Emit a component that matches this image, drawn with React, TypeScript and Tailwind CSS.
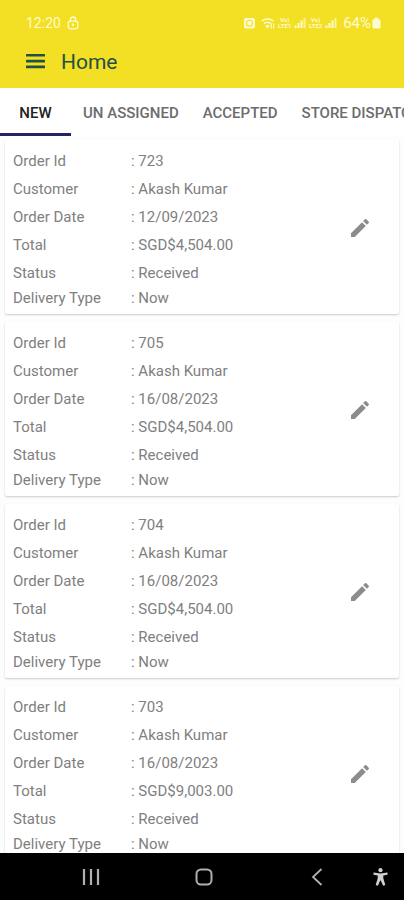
import { useState } from "react";
import type { ReactNode } from "react";

type Order = {
  id: string;
  customer: string;
  date: string;
  total: string;
  status: string;
  deliveryType: string;
};

const TABS = ["NEW", "UN ASSIGNED", "ACCEPTED", "STORE DISPATCHED"];

const ORDERS: Order[] = [
  {
    id: "723",
    customer: "Akash Kumar",
    date: "12/09/2023",
    total: "SGD$4,504.00",
    status: "Received",
    deliveryType: "Now",
  },
  {
    id: "705",
    customer: "Akash Kumar",
    date: "16/08/2023",
    total: "SGD$4,504.00",
    status: "Received",
    deliveryType: "Now",
  },
  {
    id: "704",
    customer: "Akash Kumar",
    date: "16/08/2023",
    total: "SGD$4,504.00",
    status: "Received",
    deliveryType: "Now",
  },
  {
    id: "703",
    customer: "Akash Kumar",
    date: "16/08/2023",
    total: "SGD$9,003.00",
    status: "Received",
    deliveryType: "Now",
  },
];

export default function App() {
  const [tab, setTab] = useState("NEW");

  return (
    <div className="flex h-screen flex-col overflow-hidden bg-[#fdfdfd] font-[Roboto,sans-serif]">
      <header className="h-[88px] shrink-0 bg-[#f3e024]">
        <StatusBar />
        <div className="flex h-8 items-center gap-4 pl-[26px]">
          <button type="button" aria-label="Open menu" className="text-[#1f5147]">
            <svg width="19" height="18" viewBox="0 0 19 18" fill="currentColor">
              <rect y="1" width="19" height="2.6" rx="0.5" />
              <rect y="6.8" width="19" height="2.6" rx="0.5" />
              <rect y="12.6" width="19" height="2.6" rx="0.5" />
            </svg>
          </button>
          <h1 className="text-[21px] leading-8 text-[#1f5147]">Home</h1>
        </div>
      </header>

      <nav
        role="tablist"
        aria-label="Order status"
        className="flex h-12 shrink-0 overflow-x-auto overflow-y-hidden bg-white [scrollbar-width:none]"
      >
        {TABS.map((t) => (
          <button
            key={t}
            type="button"
            role="tab"
            aria-selected={t === tab}
            onClick={() => setTab(t)}
            className={`min-w-[71px] shrink-0 border-b-[3px] px-3 pt-[6px] text-[15px] font-medium whitespace-nowrap ${
              t === tab
                ? "border-[#22265f] text-[#222222]"
                : "border-transparent text-[#6c6c6c]"
            }`}
          >
            {t}
          </button>
        ))}
      </nav>

      <main className="min-h-0 flex-1 overflow-y-auto [scrollbar-width:none]">
        <ul className="flex flex-col gap-2 px-[5px] py-1">
          {ORDERS.map((o) => (
            <OrderCard key={o.id} order={o} />
          ))}
        </ul>
      </main>

      <NavigationBar />
    </div>
  );
}

function OrderCard({ order }: { order: Order }) {
  return (
    <li className="flex items-center justify-between rounded-[2px] bg-white pt-[7px] pr-[27px] pb-[5px] pl-2 shadow-[0_1px_2px_rgba(0,0,0,0.2)]">
      <dl className="text-[15px] text-[#808080]">
        <Row label="Order Id" value={order.id} />
        <Row label="Customer" value={order.customer} />
        <Row label="Order Date" value={order.date} />
        <Row label="Total" value={order.total} />
        <Row label="Status" value={order.status} />
        <Row label="Delivery Type" value={order.deliveryType} last />
      </dl>
      <button
        type="button"
        aria-label={`Edit order ${order.id}`}
        className="text-[#8c8c8c]"
      >
        <svg width="24" height="24" viewBox="0 0 24 24" fill="currentColor">
          <path d="M3 17.25V21h3.75L17.81 9.94l-3.75-3.75L3 17.25zM20.71 7.04a1 1 0 0 0 0-1.41l-2.34-2.34a1 1 0 0 0-1.41 0l-1.83 1.83 3.75 3.75 1.83-1.83z" />
        </svg>
      </button>
    </li>
  );
}

function Row({
  label,
  value,
  last = false,
}: {
  label: string;
  value: string;
  last?: boolean;
}) {
  return (
    <div className={`flex ${last ? "leading-[22px]" : "leading-7"}`}>
      <dt className="w-[118px]">{label}</dt>
      <dd>: {value}</dd>
    </div>
  );
}

function StatusBar() {
  return (
    <div className="flex h-[46px] items-center justify-between pr-[23px] pl-[26px] text-[14px] text-[#fffbd0]">
      <div className="flex items-center gap-[6px]">
        <span>12:20</span>
        <svg width="12" height="14" viewBox="0 0 12 14" fill="none" stroke="currentColor" strokeWidth="1.3">
          <path d="M3.4 5.5V3.6a2.6 2.6 0 0 1 5.2 0v1.9" />
          <rect x="1.2" y="5.2" width="9.6" height="7.6" rx="2.6" />
          <path d="M6 7.4v3M4.8 8.4h2.4" />
        </svg>
      </div>
      <div className="flex items-center gap-[2px]">
        <svg width="11" height="12" viewBox="0 0 11 12">
          <rect y="1" width="11" height="10.5" rx="2" fill="currentColor" />
          <circle cx="5.5" cy="6.2" r="3" fill="none" stroke="#f3e024" strokeWidth="1.1" />
        </svg>
        <svg className="ml-1" width="14" height="12" viewBox="0 0 14 12" fill="none" stroke="currentColor" strokeWidth="1.5">
          <path d="M0.8 4a9 9 0 0 1 11.6 0M3 6.6a5.6 5.6 0 0 1 7 0" />
          <path d="M5.2 9a2.2 2.2 0 0 1 2.8 0L6.6 10.6zM10.4 6.5v5M12.6 6.5v5" strokeWidth="1.1" />
        </svg>
        <Volte>LTE1</Volte>
        <SignalBars />
        <Volte>LTE2</Volte>
        <SignalBars />
        <span className="ml-1 text-[15px]">64%</span>
        <svg className="-ml-px" width="9" height="12" viewBox="0 0 9 12" fill="currentColor">
          <path d="M2.6 0.8h3.8v1.4h0.8A1.3 1.3 0 0 1 8.5 3.5v6.7a1.3 1.3 0 0 1-1.3 1.3H1.8a1.3 1.3 0 0 1-1.3-1.3V3.5a1.3 1.3 0 0 1 1.3-1.3h0.8z" />
        </svg>
      </div>
    </div>
  );
}

function Volte({ children }: { children: ReactNode }) {
  return (
    <span className="flex w-[15px] flex-col items-center text-[6px] leading-[6px] font-bold">
      <span>Vo)</span>
      <span>{children}</span>
    </span>
  );
}

function SignalBars() {
  return (
    <svg width="12" height="12" viewBox="0 0 12 12" fill="currentColor">
      <rect x="0.5" y="8.5" width="2" height="2.5" />
      <rect x="3.5" y="6" width="2" height="5" />
      <rect x="6.5" y="3.5" width="2" height="7.5" />
      <rect x="9.5" y="1" width="2" height="10" opacity="0.7" />
    </svg>
  );
}

function NavigationBar() {
  return (
    <nav
      aria-label="System"
      className="grid h-[47px] shrink-0 grid-cols-[35px_1fr_1fr_1fr_31px] items-center bg-black text-[#b0b0b0]"
    >
      <button
        type="button"
        aria-label="Recent apps"
        className="col-start-2 justify-self-center"
      >
        <svg width="18" height="18" viewBox="0 0 18 18" fill="none" stroke="currentColor" strokeWidth="2.2">
          <path d="M2 1v16M9 1v16M16 1v16" />
        </svg>
      </button>
      <button
        type="button"
        aria-label="Home screen"
        className="justify-self-center"
      >
        <svg width="18" height="18" viewBox="0 0 18 18" fill="none" stroke="currentColor" strokeWidth="2">
          <rect x="1.5" y="1.5" width="15" height="15" rx="4.5" />
        </svg>
      </button>
      <button type="button" aria-label="Back" className="justify-self-center">
        <svg width="12" height="18" viewBox="0 0 12 18" fill="none" stroke="currentColor" strokeWidth="1.8">
          <path d="M10.5 1L2 9l8.5 8" />
        </svg>
      </button>
      <button
        type="button"
        aria-label="Accessibility"
        className="justify-self-start text-[#d0d0d0]"
      >
        <svg width="15" height="18" viewBox="0 0 14 18" fill="currentColor">
          <circle cx="7" cy="2.2" r="2.1" />
          <path d="M0 4.6L7 5.5l7-0.9v2.2L9.8 7.5v2.7l2 6.9-2.2 0.6L7.3 12.4h-0.6l-2.3 5.3-2.2-0.6 2-6.9V7.5L0 6.8z" />
        </svg>
      </button>
    </nav>
  );
}
